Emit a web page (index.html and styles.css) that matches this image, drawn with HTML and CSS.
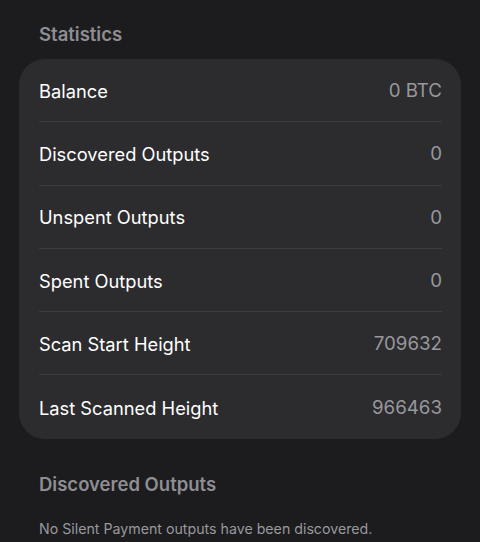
FILE: index.html
```html
<!DOCTYPE html>
<html>
<head>
<meta charset="utf-8">
<link rel="stylesheet" href="styles.css">
</head>
<body>
<div class="page">
  <h2 class="section-title">Statistics</h2>
  <div class="card">
    <div class="row"><span class="label">Balance</span><span class="value">0 BTC</span></div>
    <div class="row"><span class="label">Discovered Outputs</span><span class="value">0</span></div>
    <div class="row"><span class="label">Unspent Outputs</span><span class="value">0</span></div>
    <div class="row"><span class="label">Spent Outputs</span><span class="value">0</span></div>
    <div class="row"><span class="label">Scan Start Height</span><span class="value">709632</span></div>
    <div class="row"><span class="label">Last Scanned Height</span><span class="value">966463</span></div>
  </div>
  <h2 class="section-title second">Discovered Outputs</h2>
  <p class="note">No Silent Payment outputs have been discovered.</p>
</div>
</body>
</html>
```
FILE: styles.css
```css
html, body {
  margin: 0;
  padding: 0;
  background: #1c1c1e;
}
body {
  font-family: Inter, "Noto Sans", sans-serif;
  -webkit-font-smoothing: antialiased;
}
.page {
  width: 480px;
  height: 542px;
  overflow: hidden;
  padding-top: 22px;
  box-sizing: border-box;
}
.section-title {
  margin: 0 0 13px 39px;
  font-size: 18.5px;
  font-weight: 600;
  line-height: 24px;
  color: #8e8e93;
}
.section-title.second {
  margin-top: 33px;
  margin-bottom: 24px;
}
.card {
  margin: 0 19px;
  background: #2c2c2e;
  border-radius: 26px;
  padding: 0 19px 0 20px;
}
.row {
  height: 63.3px;
  display: flex;
  align-items: center;
  justify-content: space-between;
  padding-top: 1px;
  border-bottom: 1px solid #3d3d40;
  box-sizing: border-box;
}
.row:last-child {
  border-bottom: none;
}
.label {
  font-size: 18.3px;
  color: #ffffff;
}
.value {
  font-size: 18.7px;
  color: #98989d;
}
.note {
  margin: 0 0 0 39px;
  font-size: 14.2px;
  line-height: 18px;
  color: #98989d;
}
```
